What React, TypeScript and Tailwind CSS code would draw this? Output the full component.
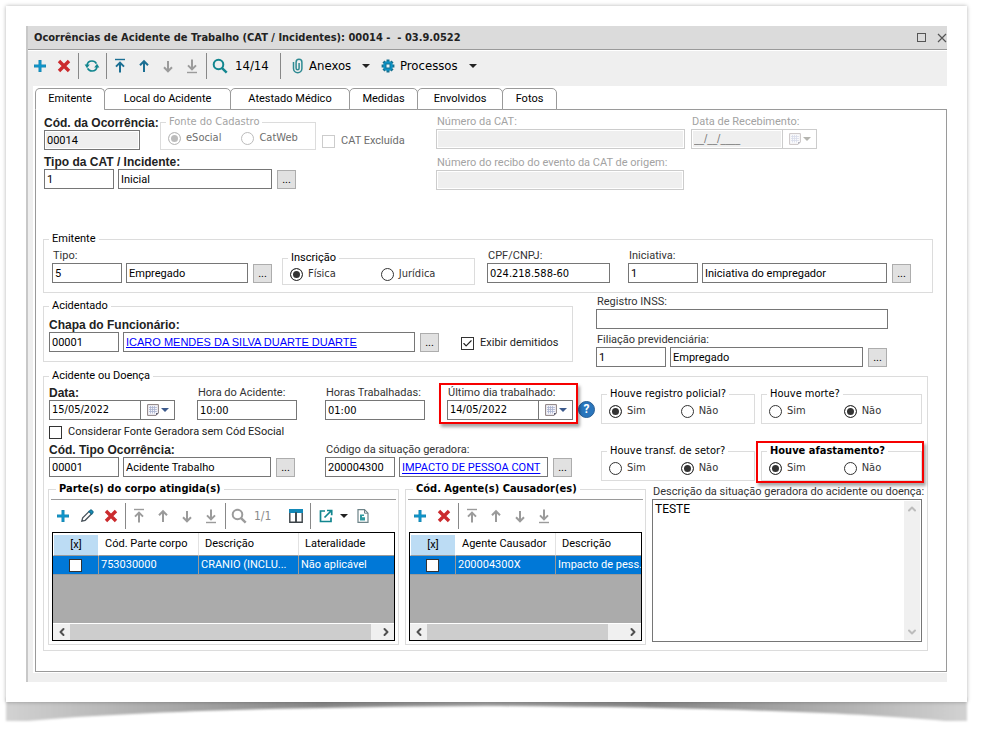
import React from "react";
import clsx from "clsx";
import { Check, ChevronDown, ChevronLeft, ChevronRight, ChevronUp } from "lucide-react";

const tahoma = "font-['DejaVu_Sans_Condensed','Noto_Sans',sans-serif]";
const arial = "font-['Liberation_Sans',Arial,sans-serif]";

/* ---------- icons ---------- */

const PlusIcon = () => (
    <svg width="14" height="14" viewBox="0 0 14 14">
        <path d="M7 1v12M1 7h12" stroke="#1789b5" strokeWidth="3" />
        <path d="M7 2v10M2 7h10" stroke="#0a9ad6" strokeWidth="1" />
    </svg>
);

const DeleteIcon = () => (
    <svg width="14" height="14" viewBox="0 0 14 14">
        <path d="M2 2l10 10M12 2L2 12" stroke="#cb2b2e" strokeWidth="3.4" />
    </svg>
);

const RefreshIcon = () => (
    <svg width="16" height="14" viewBox="0 0 16 14" fill="none" stroke="#12868f" strokeWidth="1.7">
        <path d="M3 6.500C3.300 3.700 5.400 2 8 2c2 0 3.600 1 4.400 2.600" />
        <path d="M13 7.500C12.700 10.300 10.600 12 8 12c-2 0-3.600-1-4.400-2.600" />
        <path d="M.6 5.500h5.200L3 9.200z" fill="#12868f" stroke="none" />
        <path d="M15.400 8.500h-5.200L13 4.800z" fill="#12868f" stroke="none" />
    </svg>
);

const ArrowIcon = ({ dir, bar = false, color }: { dir: "up" | "down"; bar?: boolean; color: string }) => (
    <svg width="14" height="16" viewBox="0 0 14 16" fill="none" stroke={color} strokeWidth="2">
        {dir === "up" ? (
            <>
                {bar && <path d="M2 1.500h10" strokeWidth="1.400" />}
                <path d={bar ? "M7 14.500V5" : "M7 14V3.500"} />
                <path d={bar ? "M3 8.600L7 4.600l4 4" : "M3 7.200L7 3.200l4 4"} />
            </>
        ) : (
            <>
                {bar && <path d="M2 14.500h10" strokeWidth="1.400" />}
                <path d={bar ? "M7 1.500V11" : "M7 3v10"} />
                <path d={bar ? "M3 7.400l4 4 4-4" : "M3 9.300l4 4 4-4"} />
            </>
        )}
    </svg>
);

const SearchIcon = ({ color }: { color: string }) => (
    <svg width="16" height="16" viewBox="0 0 16 16" fill="none" stroke={color}>
        <circle cx="6.500" cy="6.500" r="4.800" strokeWidth="2" />
        <path d="M9.800 9.800l4.900 4.900" strokeWidth="2.400" />
    </svg>
);

const ClipIcon = () => (
    <svg width="12" height="16" viewBox="0 0 12 16" fill="none" stroke="#2f8a92" strokeWidth="1.500">
        <path d="M1.500 4v6.500a4.200 4.200 0 0 0 8.400 0V4.200a2.900 2.900 0 0 0-5.800 0v6a1.500 1.500 0 0 0 3 0V5" />
    </svg>
);

const GearIcon = () => (
    <svg width="14" height="14" viewBox="0 0 14 14">
        <g stroke="#17708f" strokeWidth="3">
            <path d="M7 .6v12.800M.6 7h12.800M2.500 2.500l9 9M11.500 2.500l-9 9" />
        </g>
        <circle cx="7" cy="7" r="4.800" fill="#0b93c6" />
        <rect x="5" y="5" width="4" height="4" fill="#e8f4f8" stroke="#17708f" />
    </svg>
);

const PencilIcon = () => (
    <svg width="14" height="14" viewBox="0 0 14 14" fill="none" stroke="#4a545c" strokeWidth="1.300">
        <path d="M1.800 12.200l.9-3.400L9.200 2.300l2.500 2.500-6.500 6.500z" />
        <path d="M9 2.500l1.300-1.100a1 1 0 0 1 1.400 0l1 1a1 1 0 0 1 0 1.400l-1.100 1.200z" fill="#1594c4" stroke="#17708f" />
    </svg>
);

const ColumnsIcon = () => (
    <svg width="14" height="14" viewBox="0 0 14 14">
        <path d="M.8 1h12.400v12.200H.8zM7 3v10" fill="#fff" stroke="#3c4348" strokeWidth="1.400" />
        <path d="M0 0h14v4H0z" fill="#1389b8" />
        <path d="M7 3v10" stroke="#3c4348" strokeWidth="1.600" />
    </svg>
);

const ExportIcon = () => (
    <svg width="14" height="14" viewBox="0 0 14 14" fill="none" stroke="#12868f" strokeWidth="1.700">
        <path d="M6 2H1.500v10.500H12V8.500" />
        <path d="M5.500 8.500L12 2M8 1.500h4.700v4.700" />
    </svg>
);

const SheetIcon = () => (
    <svg width="12" height="14" viewBox="0 0 12 14">
        <path d="M1 .7h6.500L11 4.200v9.100H1z" fill="#fff" stroke="#6d8388" strokeWidth="1.200" />
        <path d="M7.500.7v3.500H11" fill="none" stroke="#6d8388" />
        <path d="M3 5.500h4v1.600H5v1.200h3v3.200H3z" fill="#2f9aa0" />
    </svg>
);

const Caret = ({ color = "#222" }: { color?: string }) => (
    <svg width="8" height="4" viewBox="0 0 8 4">
        <path d="M0 0h8L4 4z" fill={color} />
    </svg>
);

const CalendarIcon = ({ dim = false }: { dim?: boolean }) => (
    <svg width="12" height="12" viewBox="0 0 12 12" opacity={dim ? 0.45 : 1}>
        <path d="M.6.6h10.800v8.400l-2.400 2.400H.6z" fill="#f4f4fa" stroke="#8a7f80" />
        <path d="M2 3.500h8M2 5.500h8M2 7.500h8M3.500 2v7.500M5.500 2v7.500M7.500 2v7.500" stroke="#a9b2cf" strokeWidth=".8" />
        <path d="M11.400 9H9v2.400z" fill="#5c5c70" />
    </svg>
);

/* ---------- form pieces ---------- */

const box = "block h-5 border px-0.5 text-[11px] leading-[18px] outline-none";

const Label = ({ id, bold, dim, children }: { id: string; bold?: boolean; dim?: boolean; children: string }) => (
    <label
        htmlFor={id}
        className={clsx(
            "block h-3.5 whitespace-nowrap leading-[14px]",
            bold ? [arial, "text-[12px] font-bold text-[#222]"] : "pl-px text-[11px]",
            dim ? "text-[#a3a3a3]" : !bold && "text-[#333]"
        )}
    >
        {children}
    </label>
);

const More = ({ name }: { name: string }) => (
    <button type="button" aria-label={name} className="ml-px size-[19px] shrink-0 border border-[#adadad] bg-[#e1e1e1] text-[11px] leading-[17px]">
        ...
    </button>
);

type LookupProps = {
    id: string;
    label: string;
    code: string;
    text: string;
    width: string;
    bold?: boolean;
    link?: string;
};

// code + description + search button
const Lookup = ({ id, label, code, text, width, bold, link }: LookupProps) => (
    <div className="w-max">
        <Label id={id} bold={bold}>{label}</Label>
        <div className="flex items-end gap-1">
            <input id={id} defaultValue={code} className={clsx(box, "w-[70px] border-[#767676]")} />
            <input
                aria-label={label + " descrição"}
                defaultValue={text}
                className={clsx(box, width, "border-[#767676]", link && ["text-[#0000ff] underline", link])}
            />
            <More name={"Buscar " + label} />
        </div>
    </div>
);

type FieldProps = { id: string; label: string; value?: string; width: string; bold?: boolean; disabled?: boolean; wide?: boolean };

const Field = ({ id, label, value = "", width, bold, disabled, wide }: FieldProps) => (
    <div className={width}>
        <Label id={id} bold={bold} dim={disabled}>{label}</Label>
        <input
            id={id}
            defaultValue={value}
            disabled={disabled}
            className={clsx(
                box,
                "w-full",
                wide && tahoma,
                disabled ? "border-[#cccccc] bg-[#efefef] shadow-[inset_0_0_0_1px_#fff]" : "border-[#767676]"
            )}
        />
    </div>
);

const DateField = ({ id, label, value, bold, disabled }: { id: string; label: string; value: string; bold?: boolean; disabled?: boolean }) => (
    <div className="w-[126px]">
        <Label id={id} bold={bold} dim={disabled}>{label}</Label>
        <div className={clsx("flex h-5 border", disabled ? "border-[#cccccc]" : "border-[#767676]")}>
            <input
                id={id}
                defaultValue={value}
                disabled={disabled}
                className={clsx(
                    "w-[91px] border-r px-0.5 text-[11px] leading-[18px] outline-none",
                    tahoma,
                    disabled ? "border-[#cccccc] bg-[#efefef] text-[#777] shadow-[inset_0_0_0_1px_#fff]" : "border-[#767676]"
                )}
            />
            <button type="button" aria-label="Abrir calendário" disabled={disabled} className="flex flex-1 items-center justify-center gap-0.5">
                <CalendarIcon dim={disabled} />
                <Caret color={disabled ? "#b5b5b0" : "#3c5a8c"} />
            </button>
        </div>
    </div>
);

const CheckBox = ({ id, label, checked, disabled }: { id: string; label: string; checked?: boolean; disabled?: boolean }) => (
    <label htmlFor={id} className={clsx("flex h-3.5 items-center gap-1.5 whitespace-nowrap text-[11px] leading-[14px]", disabled ? "text-[#6d6d6d]" : "text-[#222]")}>
        <span className="grid size-[13px] shrink-0">
            <input
                id={id}
                type="checkbox"
                defaultChecked={checked}
                disabled={disabled}
                className="peer col-start-1 row-start-1 size-[13px] appearance-none border border-[#333] bg-white disabled:border-[#cccccc]"
            />
            <Check className="pointer-events-none col-start-1 row-start-1 hidden size-[13px] p-px text-[#222] peer-checked:block" strokeWidth={2.5} />
        </span>
        {label}
    </label>
);

const Radio = ({ name, label, checked, disabled }: { name: string; label: string; checked?: boolean; disabled?: boolean }) => (
    <label className={clsx("flex items-center gap-[5px] whitespace-nowrap text-[11px] leading-[14px]", tahoma, disabled ? "text-[#6d6d6d]" : "text-[#333]")}>
        <input
            type="radio"
            name={name}
            defaultChecked={checked}
            disabled={disabled}
            className="size-[13px] appearance-none rounded-full border border-[#333] bg-white shadow-[inset_0_0_0_2px_#fff] checked:bg-[#333] disabled:border-[#bcbcbc] disabled:checked:bg-[#bcbcbc]"
        />
        {label}
    </label>
);

type GroupProps = { title: string; className?: string; legend?: string; children: React.ReactNode };

const Group = ({ title, className, legend = "text-[11px]", children }: GroupProps) => (
    <fieldset className={clsx("min-w-0 border border-[#dcdcdc]", className)}>
        <legend className={clsx("ml-[5px] h-3.5 whitespace-nowrap px-[3px] leading-[14px]", legend)}>{title}</legend>
        {children}
    </fieldset>
);

// "Sim / Não" question
const YesNo = ({ name, title, yes, className, bold, gap }: { name: string; title: string; yes: boolean; className: string; bold?: boolean; gap: string }) => (
    <Group title={title} className={clsx("h-[37px]", className)} legend={clsx("text-[11px]", tahoma, bold && "font-bold")}>
        <div className={clsx("flex pl-[7px] pt-[3px]", gap)}>
            <Radio name={name} label="Sim" checked={yes} />
            <Radio name={name} label="Não" checked={!yes} />
        </div>
    </Group>
);

/* ---------- toolbars ---------- */

const Tool = ({ name, children }: { name: string; children: React.ReactNode }) => (
    <button type="button" aria-label={name} className="flex size-6 shrink-0 items-center justify-center">
        {children}
    </button>
);

const Divider = () => <div className="ml-0.5 mr-px h-[26px] w-px shrink-0 bg-[#888888]" />;

const Moves = ({ active }: { active: boolean }) => {
    const up = active ? "#1b6f93" : "#9b9b9b";
    return (
        <>
            <Tool name="Primeiro"><ArrowIcon dir="up" bar color={up} /></Tool>
            <Tool name="Anterior"><ArrowIcon dir="up" color={up} /></Tool>
            <Tool name="Próximo"><ArrowIcon dir="down" color="#9b9b9b" /></Tool>
            <Tool name="Último"><ArrowIcon dir="down" bar color="#9b9b9b" /></Tool>
        </>
    );
};

const MainToolbar = () => (
    <div className={clsx("flex h-[35px] items-center bg-[#efefef] pb-[5px] text-[13px]", tahoma)}>
        <Tool name="Novo"><PlusIcon /></Tool>
        <Tool name="Excluir"><DeleteIcon /></Tool>
        <Divider />
        <Tool name="Atualizar"><RefreshIcon /></Tool>
        <Divider />
        <Moves active />
        <Divider />
        <Tool name="Pesquisar"><SearchIcon color="#12868f" /></Tool>
        <span className="w-[46px] pl-[3px]">14/14</span>
        <Divider />
        <button type="button" className="flex items-center gap-[5px] pl-2.5">
            <ClipIcon />
            <span className="w-12 text-left">Anexos</span>
            <Caret />
        </button>
        <button type="button" className="flex items-center gap-[5px] pl-[11px]">
            <GearIcon />
            <span className="w-16 text-left">Processos</span>
            <Caret />
        </button>
    </div>
);

/* ---------- grids ---------- */

type GridProps = { name: string; heads: string[]; row: string[]; thumb: string };

const DataGrid = ({ name, heads, row, thumb }: GridProps) => (
    <div className="mx-px flex h-[109px] flex-col overflow-hidden border border-black bg-[#ababab]">
        <table className="w-full table-fixed border-separate border-spacing-0 text-[11px] leading-[14px]">
            <thead>
                <tr className="h-[23px] bg-white">
                    <th className="w-[45px] border-b border-l border-t-2 border-white border-b-[#9a9a9a] bg-[#bcdcf4] p-0 font-normal">[x]</th>
                    {heads.map((h, i) => (
                        <th
                            key={h}
                            className={clsx(
                                "whitespace-nowrap border-b border-l border-b-[#9a9a9a] py-0 pl-1.5 pr-0 text-left font-normal",
                                i < 2 && "w-[100px]",
                                i > 0 ? "border-l-[#e2e2e2]" : "border-l-white"
                            )}
                        >
                            {h}
                        </th>
                    ))}
                </tr>
            </thead>
            <tbody>
                <tr className="h-[19px] bg-[#0078d7] text-white">
                    <td className="border-b border-[#9a9a9a] p-0">
                        <input type="checkbox" aria-label={"Selecionar " + name} className="mx-auto block size-[13px] appearance-none border border-[#333] bg-white" />
                    </td>
                    {row.map((c) => (
                        <td key={c} className="whitespace-nowrap border-b border-l border-[#9a9a9a] py-0 pl-0.5 pr-0">{c}</td>
                    ))}
                </tr>
            </tbody>
        </table>
        <div className="mt-auto flex h-[17px] items-center border-t border-white bg-[#f0f0f0]">
            <button type="button" aria-label="Rolar para a esquerda" className="flex w-[17px] justify-center">
                <ChevronLeft className="size-3 text-[#505050]" strokeWidth={4} />
            </button>
            <div className={clsx("h-full bg-[#cdcdcd]", thumb)} />
            <button type="button" aria-label="Rolar para a direita" className="ml-auto flex w-[17px] justify-center">
                <ChevronRight className="size-3 text-[#505050]" strokeWidth={4} />
            </button>
        </div>
    </div>
);

/* ---------- sections ---------- */

const tabs = [
    { name: "Emitente", width: "w-[70px]" },
    { name: "Local do Acidente", width: "w-[127px]" },
    { name: "Atestado Médico", width: "w-[120px]" },
    { name: "Medidas", width: "w-[69px]" },
    { name: "Envolvidos", width: "w-[86px]" },
    { name: "Fotos", width: "w-[55px]" },
];

const Tabs = () => (
    <div role="tablist" className="flex pt-0.5">
        {tabs.map((t, i) => (
            <button
                key={t.name}
                type="button"
                role="tab"
                aria-selected={i === 0}
                className={clsx(
                    "relative -mb-px h-[22px] rounded-t-[5px] border border-[#9a9a9a] bg-white text-[11px] leading-[14px]",
                    t.width,
                    i === 0 ? "border-b-white" : "-ml-px"
                )}
            >
                {t.name}
            </button>
        ))}
    </div>
);

const Header = () => (
    <div className="flex pl-px">
        <div className="flex w-[392px] shrink-0 flex-col gap-[5px]">
            <div className="flex h-[35px] items-end">
                <div className="w-24">
                    <Label id="codigo" bold>Cód. da Ocorrência:</Label>
                    <input id="codigo" defaultValue="00014" readOnly className={clsx(box, "w-full border-[#767676] bg-[#efefef] shadow-[inset_0_0_0_1px_#fff]")} />
                </div>
                <Group title="Fonte do Cadastro" className="ml-5 h-[35px] w-[156px] bg-white" legend={clsx("text-[11px] text-[#a3a3a3]", tahoma)}>
                    <div className="flex gap-5 pl-[7px] pt-0.5">
                        <Radio name="fonte" label="eSocial" checked disabled />
                        <Radio name="fonte" label="CatWeb" disabled />
                    </div>
                </Group>
                <div className="pb-0.5 pl-1.5">
                    <CheckBox id="excluida" label="CAT Excluída" disabled />
                </div>
            </div>
            <Lookup id="tipo-cat" label="Tipo da CAT / Incidente:" code="1" text="Inicial" width="w-[154px]" bold />
        </div>
        <div className="flex flex-col gap-[7px]">
            <div className="flex h-[34px] items-end gap-1.5">
                <Field id="num-cat" label="Número da CAT:" width="w-[249px]" disabled />
                <DateField id="recebimento" label="Data de Recebimento:" value="__/__/____" disabled />
            </div>
            <Field id="recibo" label="Número do recibo do evento da CAT de origem:" width="w-[248px]" disabled />
        </div>
    </div>
);

const Emitente = () => (
    <Group title="Emitente" className="mt-[42px]">
        <div className="flex items-start pb-[7px] pl-2 pt-[3px]">
            <Lookup id="tipo" label="Tipo:" code="5" text="Empregado" width="w-[122px]" />
            <Group title="Inscrição" className="ml-2.5 mt-0.5 h-[34px] w-[193px]">
                <div className="flex gap-[45px] pl-[7px] pt-0.5">
                    <Radio name="inscricao" label="Física" checked />
                    <Radio name="inscricao" label="Jurídica" />
                </div>
            </Group>
            <div className="ml-3 mr-[18px]">
                <Field id="cpf" label="CPF/CNPJ:" value="024.218.588-60" width="w-[123px]" wide />
            </div>
            <Lookup id="iniciativa" label="Iniciativa:" code="1" text="Iniciativa do empregador" width="w-[185px]" />
        </div>
    </Group>
);

const Acidentado = () => (
    <div className="flex items-start gap-[23px]">
        <Group title="Acidentado" className="mt-1.5 w-[530px]">
            <div className="flex items-end gap-[22px] pb-[9px] pl-[5px] pt-[5px]">
                <Lookup id="chapa" label="Chapa do Funcionário:" code="00001" text="ICARO MENDES DA SILVA DUARTE DUARTE" width="w-[292px]" bold link={clsx(arial, "underline-offset-1")} />
                <div className="pb-0.5">
                    <CheckBox id="demitidos" label="Exibir demitidos" checked />
                </div>
            </div>
        </Group>
        <div className="mt-0.5 flex flex-col gap-1">
            <Field id="inss" label="Registro INSS:" width="w-[292px]" />
            <Lookup id="filiacao" label="Filiação previdenciária:" code="1" text="Empregado" width="w-[193px]" />
        </div>
    </div>
);

const mark = "pointer-events-none absolute border-2 border-[#f60000] shadow-[2px_3px_3px_rgba(0,0,0,0.35)]";

const Details = () => (
    <Group title="Acidente ou Doença" className="mr-[5px] mt-0.5">
        <div className="flex h-[41px] items-start pl-[5px] pr-[5px] pt-[3px]">
            <DateField id="data" label="Data:" value="15/05/2022" bold />
            <div className="ml-[22px] flex gap-7">
                <Field id="hora" label="Hora do Acidente:" value="10:00" width="w-[100px]" wide />
                <Field id="horas" label="Horas Trabalhadas:" value="01:00" width="w-[100px]" wide />
            </div>
            <div className="relative ml-[22px]">
                <DateField id="ultimo" label="Último dia trabalhado:" value="14/05/2022" />
                <div className={clsx(mark, "-bottom-1 -left-2 -right-[5px] -top-[3px]")} />
            </div>
            <button type="button" aria-label="Ajuda" className="ml-[5px] mt-[15px] size-[17px] rounded-full border border-[#2b5f94] bg-[#2a76bd] text-[12px] font-bold leading-[15px] text-white">
                ?
            </button>
            <YesNo name="policial" title="Houve registro policial?" yes className="ml-1.5 mt-px w-[154px]" gap="gap-[35px]" />
            <YesNo name="morte" title="Houve morte?" yes={false} className="ml-1.5 mt-px w-[161px]" gap="gap-[38px]" />
        </div>
        <div className="pl-[5px] pt-px">
            <CheckBox id="considerar" label="Considerar Fonte Geradora sem Cód ESocial" />
        </div>
        <div className="flex h-[43px] items-start pl-[5px] pt-1">
            <Lookup id="tipo-oc" label="Cód. Tipo Ocorrência:" code="00001" text="Acidente Trabalho" width="w-[148px]" bold />
            <div className="ml-[30px]">
                <Lookup id="situacao" label="Código da situação geradora:" code="200004300" text="IMPACTO DE PESSOA CONT" width="w-[149px]" link="underline-offset-2" />
            </div>
            <YesNo name="transf" title="Houve transf. de setor?" yes={false} className="ml-[29px] mt-px w-[154px]" gap="gap-[35px]" />
            <div className="relative ml-1.5 mt-px">
                <YesNo name="afastamento" title="Houve afastamento?" yes className="w-[161px]" gap="gap-[38px]" bold />
                <div className={clsx(mark, "-bottom-0.5 -left-[5px] -right-0.5 -top-[3px]")} />
            </div>
        </div>
        <div className="flex items-start gap-1.5 pb-[5px] pl-1 pr-[5px]">
            <Group title="Parte(s) do corpo atingida(s)" className="w-[351px] px-0.5 pb-[3px]" legend={clsx("text-[11px] font-bold", tahoma)}>
                <div className="mt-[3px] flex h-[33px] items-center border-t border-[#9a9a9a]">
                    <Tool name="Novo"><PlusIcon /></Tool>
                    <Tool name="Editar"><PencilIcon /></Tool>
                    <Tool name="Excluir"><DeleteIcon /></Tool>
                    <Divider />
                    <Moves active={false} />
                    <Divider />
                    <Tool name="Pesquisar"><SearchIcon color="#9b9b9b" /></Tool>
                    <span className={clsx("w-[33px] pl-[3px] text-[12px] text-[#8a8a8a]", tahoma)}>1/1</span>
                    <Tool name="Colunas"><ColumnsIcon /></Tool>
                    <Divider />
                    <button type="button" aria-label="Exportar" className="flex h-6 items-center gap-[7px] pl-[7px]">
                        <ExportIcon />
                        <Caret />
                    </button>
                    <button type="button" aria-label="Relatório" className="flex h-6 w-[30px] items-center justify-center">
                        <SheetIcon />
                    </button>
                </div>
                <DataGrid
                    name="parte do corpo"
                    heads={["Cód. Parte corpo", "Descrição", "Lateralidade"]}
                    row={["753030000", "CRANIO (INCLU...", "Não aplicável"]}
                    thumb="w-[301px]"
                />
            </Group>
            <Group title="Cód. Agente(s) Causador(es)" className="w-[241px] px-0.5 pb-[3px]" legend={clsx("text-[11px] font-bold", tahoma)}>
                <div className="mt-[3px] flex h-[33px] items-center border-t border-[#9a9a9a]">
                    <Tool name="Novo"><PlusIcon /></Tool>
                    <Tool name="Excluir"><DeleteIcon /></Tool>
                    <Divider />
                    <Moves active={false} />
                </div>
                <DataGrid
                    name="agente causador"
                    heads={["Agente Causador", "Descrição"]}
                    row={["200004300X", "Impacto de pess."]}
                    thumb="w-[181px]"
                />
            </Group>
            <div className="min-w-0 flex-1 pt-[3px]">
                <Label id="descricao">Descrição da situação geradora do acidente ou doença:</Label>
                <div className="flex h-[143px] border border-[#767676]">
                    <textarea id="descricao" defaultValue="TESTE" className="min-w-0 flex-1 resize-none px-0.5 py-px text-[12px] leading-4 outline-none" />
                    <div className="my-px mr-px flex w-4 flex-col items-center justify-between bg-[#f0f0f0] py-0.5 text-[#bcbcbc]">
                        <ChevronUp className="size-3" strokeWidth={4} />
                        <ChevronDown className="size-3" strokeWidth={4} />
                    </div>
                </div>
            </div>
        </div>
    </Group>
);

const CurlShadow = () => (
    <svg className="block h-6 w-full" viewBox="0 0 961 24" preserveAspectRatio="none" overflow="visible">
        <defs>
            <linearGradient id="curl" x1="0" x2="1" y1="0" y2="0">
                <stop offset="0" stopColor="#d2d2d2" />
                <stop offset="0.12" stopColor="#b4b4b4" />
                <stop offset="0.33" stopColor="#878787" />
                <stop offset="0.5" stopColor="#a0a0a0" />
                <stop offset="0.67" stopColor="#878787" />
                <stop offset="0.88" stopColor="#b4b4b4" />
                <stop offset="1" stopColor="#d2d2d2" />
            </linearGradient>
            <filter id="soft" x="-5%" y="-50%" width="110%" height="200%">
                <feGaussianBlur stdDeviation="1.200" />
            </filter>
        </defs>
        <path d="M0-4V19H22C130 9 300 5 480.500 4C661 5 831 9 939 19H961V-4z" fill="url(#curl)" filter="url(#soft)" />
    </svg>
);

export default function App() {
    return (
        <main className="overflow-hidden bg-white pl-1.5 pr-3.5 pt-1.5 font-[Roboto,'Liberation_Sans',sans-serif] text-black">
            <div className="relative bg-white p-5 shadow-[0_0_4px_rgba(0,0,0,0.3)]">
                <div className="border-l-2 border-[#c8c8c8] bg-[#efefef] pb-[9px]">
                    <header className="flex h-6 items-center justify-between border-b border-[#9a9a9a] bg-[#dbdbdb] pl-1.5">
                        <h1 className={clsx("whitespace-pre text-[11px] font-bold leading-[14px] text-[#222]", tahoma)}>
                            {"Ocorrências de Acidente de Trabalho (CAT / Incidentes): 00014 -  - 03.9.0522"}
                        </h1>
                        <div className="flex items-center gap-[11px]">
                            <button type="button" aria-label="Maximizar" className="size-[9px] border border-[#555]" />
                            <button type="button" aria-label="Fechar">
                                <svg width="10" height="10" viewBox="0 0 10 10">
                                    <path d="M1 1l8 8M9 1L1 9" stroke="#555" strokeWidth="1.200" />
                                </svg>
                            </button>
                        </div>
                    </header>
                    <div className="border-t border-white">
                        <MainToolbar />
                    </div>
                    <div className="ml-[5px] bg-white pb-px pl-0.5">
                        <Tabs />
                        <form className="border border-[#9a9a9a] pb-5 pl-[7px] pr-[13px] pt-[5px]">
                            <Header />
                            <Emitente />
                            <Acidentado />
                            <Details />
                        </form>
                    </div>
                </div>
            </div>
            <CurlShadow />
        </main>
    );
}
